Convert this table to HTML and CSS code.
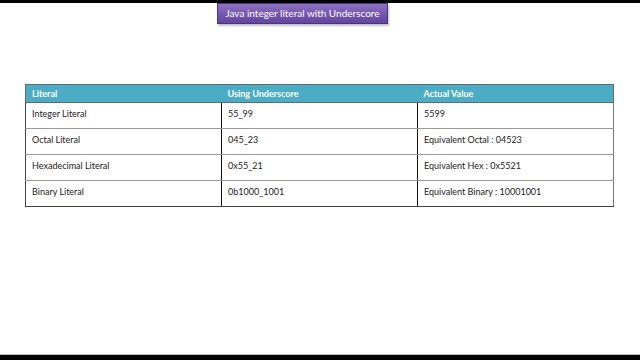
FILE: index.html
```html
<!DOCTYPE html>
<html>
<head>
<meta charset="utf-8">
<link rel="stylesheet" href="styles.css">
</head>
<body>
<div class="slide">
  <div class="topbar"></div>
  <div class="title-row">
    <div class="title">Java integer literal with Underscore</div>
  </div>
  <table class="lit">
    <thead>
      <tr><th>Literal</th><th>Using Underscore</th><th>Actual Value</th></tr>
    </thead>
    <tbody>
      <tr><td>Integer Literal</td><td>55_99</td><td>5599</td></tr>
      <tr><td>Octal Literal</td><td>045_23</td><td>Equivalent Octal : 04523</td></tr>
      <tr><td>Hexadecimal Literal</td><td>0x55_21</td><td>Equivalent Hex : 0x5521</td></tr>
      <tr><td>Binary Literal</td><td>0b1000_1001</td><td>Equivalent Binary : 10001001</td></tr>
    </tbody>
  </table>
  <div class="spacer"></div>
  <div class="bottombar"></div>
</div>
</body>
</html>
```
FILE: styles.css
```css
html, body {
  margin: 0;
  padding: 0;
  background: #fff;
}
.slide {
  width: 640px;
  height: 360px;
  display: flex;
  flex-direction: column;
  font-family: Lato, "Open Sans", sans-serif;
  background: #fff;
}
.topbar {
  height: 3px;
  background: #000;
  flex: none;
}
.title-row {
  display: flex;
  padding-left: 217px;
  height: 81px;
  flex: none;
  align-items: flex-start;
}
.title {
  width: 171px;
  height: 21px;
  box-sizing: border-box;
  border: 1px solid #4b3578;
  background: linear-gradient(#8d72c4, #7456ae 55%, #6446a0);
  color: #fff;
  font-size: 10px;
  line-height: 19px;
  text-align: center;
  box-shadow: 1px 2px 2px rgba(0,0,0,0.25);
}
.lit {
  margin-left: 25px;
  width: 589px;
  border-collapse: collapse;
  font-size: 9px;
  color: #222;
  flex: none;
}
.lit th {
  background: #4bacc6;
  color: #fff;
  font-weight: bold;
  text-align: left;
  height: 18px;
  padding: 0 0 0 6px;
  border: 1px solid #5f6b70;
  border-left: none;
  border-right: none;
  box-sizing: border-box;
}
.lit th:first-child { border-left: 1px solid #5f6b70; }
.lit th:last-child { border-right: 1px solid #5f6b70; }
.lit td {
  height: 26px;
  padding: 5px 0 0 6px;
  vertical-align: top;
  border-top: 1px solid #9a9a9a;
  border-bottom: 1px solid #9a9a9a;
  border-left: 1px solid #111;
  border-right: 1px solid #111;
  box-sizing: border-box;
}
.lit td:first-child, .lit th:first-child { width: 196px; }
.lit td:nth-child(2), .lit th:nth-child(2) { width: 196px; }
.lit tbody tr:last-child td { border-bottom: 1px solid #444; }
.lit td:last-child { border-right: 1px solid #777; }
.lit td:first-child { border-left: 1px solid #444; }
.spacer { flex: 1; }
.bottombar {
  height: 5px;
  background: #000;
  border-top: 1px solid #bbb;
  flex: none;
}
```
